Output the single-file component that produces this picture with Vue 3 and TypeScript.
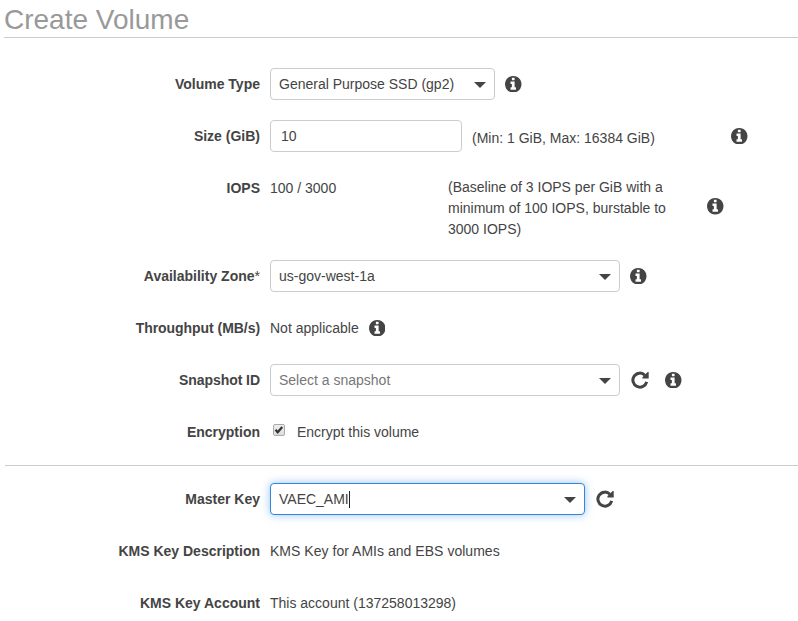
<script setup lang="ts">
import { defineComponent, h, ref } from 'vue'

const infoPath =
  'M1024 1376v-160q0-14-9-23t-23-9h-96v-512q0-14-9-23t-23-9h-320q-14 0-23 9t-9 23v160q0 14 9 23t23 9h96v320h-96q-14 0-23 9t-9 23v160q0 14 9 23t23 9h448q14 0 23-9t9-23zM896 480v-160q0-14-9-23t-23-9h-192q-14 0-23 9t-9 23v160q0 14 9 23t23 9h192q14 0 23-9t9-23zM1536 896q0 209-103 385.5t-279.5 279.5t-385.5 103t-385.5-103t-279.5-279.5t-103-385.5t103-385.5t279.5-279.5t385.5-103t385.5 103t279.5 279.5t103 385.5z'

const InfoIcon = defineComponent(() => () =>
  h('svg', { viewBox: '0 128 1536 1536', width: 16.5, height: 16.5 }, [
    h('path', { d: infoPath, fill: '#444' }),
  ]),
)

const RefreshIcon = defineComponent(() => () =>
  h('svg', { viewBox: '0 0 18 18', width: 18, height: 18 }, [
    h('path', {
      d: 'M13.9 4.2A7 7 0 1 0 15.7 10.9',
      fill: 'none',
      stroke: '#444',
      'stroke-width': 3,
    }),
    h('path', { d: 'M17.7 1V7.4H11.4V6.3L16.7 1Z', fill: '#444' }),
  ]),
)

const CaretIcon = defineComponent(() => () =>
  h('svg', { viewBox: '0 0 12 6', width: 12, height: 6 }, [
    h('path', { d: 'M0 0H12L6 6Z', fill: '#444' }),
  ]),
)

const size = ref('10')
const encrypted = ref(true)
</script>

<template>
  <main class="page">
    <h1 class="title">Create Volume</h1>

    <section class="group main-group">
      <div class="row">
        <div class="label">Volume Type</div>
        <div class="select type-select"><span>General Purpose SSD (gp2)</span><CaretIcon class="caret" /></div>
        <InfoIcon class="icon" />
      </div>
      <div class="row">
        <div class="label">Size (GiB)</div>
        <input v-model="size" class="input" type="text" />
        <span class="range">(Min: 1 GiB, Max: 16384 GiB)</span>
        <InfoIcon class="icon" />
      </div>
      <div class="row tall">
        <div class="label">IOPS</div>
        <span class="iops">100 / 3000</span>
        <p class="note">(Baseline of 3 IOPS per GiB with a<br />minimum of 100 IOPS, burstable to<br />3000 IOPS)</p>
        <InfoIcon class="icon" />
      </div>
      <div class="row">
        <div class="label">Availability Zone<span class="star">*</span></div>
        <div class="select wide"><span>us-gov-west-1a</span><CaretIcon class="caret" /></div>
        <InfoIcon class="icon" />
      </div>
      <div class="row">
        <div class="label snug">Throughput (MB/s)</div>
        <span class="na">Not applicable</span>
        <InfoIcon class="icon" />
      </div>
      <div class="row">
        <div class="label snug">Snapshot ID</div>
        <div class="select wide placeholder"><span>Select a snapshot</span><CaretIcon class="caret" /></div>
        <RefreshIcon class="refresh" />
        <InfoIcon class="icon after-refresh" />
      </div>
      <div class="row">
        <div class="label">Encryption</div>
        <label class="check">
          <input v-model="encrypted" type="checkbox" />
          <span class="box">
            <svg v-if="encrypted" viewBox="0 0 12 12" width="12" height="12">
              <path d="M2.5 5.8L4.7 8.3L9.2 3" fill="none" stroke="#333" stroke-width="2.2" />
            </svg>
          </span>
          <span class="encrypt-text">Encrypt this volume</span>
        </label>
      </div>
    </section>

    <section class="group key-group">
      <div class="row">
        <div class="label">Master Key</div>
        <div class="select key-select focused"><span class="typed">VAEC_AMI</span><CaretIcon class="caret" /></div>
        <RefreshIcon class="refresh" />
      </div>
      <div class="row">
        <div class="label">KMS Key Description</div>
        <span class="description">KMS Key for AMIs and EBS volumes</span>
      </div>
      <div class="row">
        <div class="label">KMS Key Account</div>
        <span class="account">This account (137258013298)</span>
      </div>
    </section>
  </main>
</template>

<style>
body {
  background: #fff;
  overflow: hidden;
}
</style>

<style scoped>
.page {
  box-sizing: border-box;
  height: 621px;
  padding-left: 4px;
  overflow: hidden;
  font: 14px/21px "Liberation Sans", Arial, sans-serif;
  color: #444;
}
.title {
  box-sizing: border-box;
  height: 38px;
  margin: 0;
  padding-top: 4px;
  border-bottom: 1px solid #ccc;
  font-size: 28px;
  line-height: 32px;
  font-weight: 400;
  color: #999;
}
.group {
  display: flex;
  flex-direction: column;
  gap: 20px;
}
.main-group {
  padding: 30px 0 17px;
}
.key-group {
  margin-left: 1px;
  padding-top: 17px;
  border-top: 1px solid #ccc;
}
.row {
  display: flex;
  align-items: center;
  height: 32px;
}
.row.tall {
  align-items: flex-start;
  height: 68px;
}
.label {
  width: 256px;
  margin-right: 10px;
  text-align: right;
  font-weight: 700;
  white-space: nowrap;
}
.label.snug {
  letter-spacing: -0.05px;
}
.key-group .label {
  width: 255px;
}
.star {
  font-weight: 400;
}
.select,
.input {
  box-sizing: border-box;
  height: 32px;
  border: 1px solid #ccc;
  border-radius: 4px;
  background: #fff;
}
.select {
  display: flex;
  align-items: center;
  justify-content: space-between;
  padding: 0 8.5px 0 8px;
}
.type-select {
  width: 225px;
}
.wide {
  width: 350px;
}
.key-select {
  width: 315px;
}
.placeholder {
  color: #777;
}
.focused {
  border-color: #3385d9;
  box-shadow: 0 0 8px rgba(51, 140, 230, 0.5);
}
.typed {
  border-right: 1px solid #222;
  line-height: 17px;
}
.caret {
  margin-top: 2px;
}
.input {
  width: 192px;
  padding: 0 10px;
  font: inherit;
  color: inherit;
  outline: none;
}
.icon {
  flex: none;
  margin-left: 10px;
}
.refresh {
  flex: none;
  margin: 0 0 0 11px;
}
.after-refresh {
  margin-left: 16px;
}
.range {
  width: 249px;
  margin-left: 10px;
  padding-top: 4px;
}
.iops {
  width: 178px;
}
.tall .label,
.iops {
  padding-top: 6px;
}
.note {
  width: 249px;
  margin: 5px 0 0;
  white-space: nowrap;
}
.tall .icon {
  margin-top: 26px;
}
.check {
  display: flex;
  align-items: center;
}
.check input {
  position: absolute;
  opacity: 0;
}
.box {
  box-sizing: border-box;
  display: flex;
  align-items: center;
  justify-content: center;
  width: 12px;
  height: 12px;
  margin: -4px 12px 0 3px;
  border: 1px solid #aaa;
  border-radius: 2px;
  background: linear-gradient(#eee, #ddd);
}
.box svg {
  flex: none;
}
.description {
  letter-spacing: 0.03px;
}
</style>
